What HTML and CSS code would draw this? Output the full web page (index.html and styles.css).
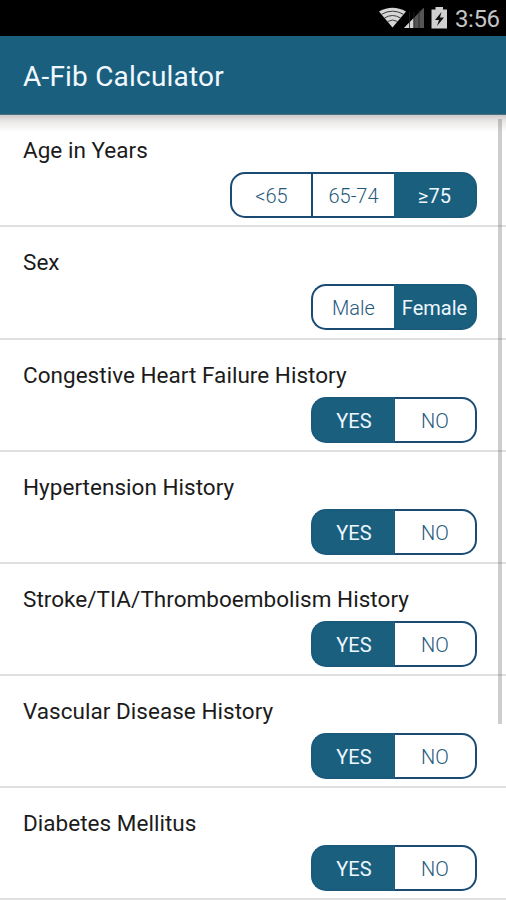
FILE: index.html
```html
<!DOCTYPE html>
<html lang="en">
<head>
<meta charset="utf-8">
<title>A-Fib Calculator</title>
<link rel="stylesheet" href="styles.css">
</head>
<body>
<div class="screen">
  <div class="status">
    <svg class="signals" width="72" height="36" viewBox="0 0 72 36" aria-hidden="true">
      <path d="M0 11.500Q13.500 4 27 11.500L13.500 27.500Z" fill="#d6d6d6"/>
      <g fill="none" stroke="#3a3a3a" stroke-width="1">
        <path d="M2.500 14.300Q13.500 8 24.500 14.300M5.500 18Q13.500 13 21.500 18M8.500 21.500Q13.500 18.500 18.500 21.500"/>
      </g>
      <path d="M45 7.500V28H25Z" fill="#555"/>
      <path d="M34.500 18.300V28H25Z" fill="#d4d4d4"/>
      <path d="M30.500 12V28M35 12V28M40 10V28" stroke="#222" stroke-width="0.8"/>
      <path d="M56.500 7H64V9.500H68V28.500H52.500V9.500H56.500Z" fill="#d0d0d0"/>
      <path d="M62.500 12L56 20H60L58 26L65 17.500H61Z" fill="#111"/>
    </svg>
    <span class="clock">3:56</span>
  </div>
  <header class="appbar"><h1>A-Fib Calculator</h1></header>
  <main class="list">
    <section class="row"><h2>Age in Years</h2><div class="seg three"><span>&lt;65</span><span>65-74</span><span class="on">≥75</span></div></section>
    <section class="row sex"><h2>Sex</h2><div class="seg"><span>Male</span><span class="on">Female</span></div></section>
    <section class="row"><h2>Congestive Heart Failure History</h2><div class="seg yn"><span class="on">YES</span><span>NO</span></div></section>
    <section class="row"><h2>Hypertension History</h2><div class="seg yn"><span class="on">YES</span><span>NO</span></div></section>
    <section class="row"><h2>Stroke/TIA/Thromboembolism History</h2><div class="seg yn"><span class="on">YES</span><span>NO</span></div></section>
    <section class="row"><h2>Vascular Disease History</h2><div class="seg yn"><span class="on">YES</span><span>NO</span></div></section>
    <section class="row"><h2>Diabetes Mellitus</h2><div class="seg yn"><span class="on">YES</span><span>NO</span></div></section>
    <div class="scrollbar"></div>
  </main>
</div>
</body>
</html>
```
FILE: styles.css
```css
* { box-sizing: border-box; }
body { margin: 0; font-family: Roboto, "Liberation Sans", sans-serif; background: #fff; }
.screen { width: 506px; height: 900px; overflow: hidden; display: flex; flex-direction: column; }
.status { height: 36px; flex: none; background: #000; display: flex; justify-content: flex-end; padding-right: 7px; gap: 4px; }
.signals { display: block; }
.clock { color: #c4c4c4; font-size: 24px; line-height: 38px; width: 44px; white-space: nowrap; letter-spacing: -0.4px; }
.appbar { height: 79px; flex: none; background: #1a607e; border-bottom: 1px solid #4e7180; display: flex; align-items: center; padding-left: 23px; }
h1 { margin: 0; padding-top: 3px; font-size: 28px; font-weight: 400; color: #f2f8ff; line-height: 34px; white-space: nowrap; letter-spacing: 0.2px; }
.list { position: relative; flex: 1; background: linear-gradient(#cdc9c8, #e9e7e6 6px, #fff 17px); }
.row { height: 112px; border-bottom: 2px solid #e0e0e0; padding: 21px 29px 0 23px; display: flex; flex-direction: column; }
.row.sex { height: 113px; }
h2 { margin: 0 0 8px; height: 28px; line-height: 28px; font-size: 22.5px; font-weight: 400; color: #1b1b1b; white-space: nowrap; letter-spacing: 0.03px; }
.seg { align-self: flex-end; width: 166px; height: 46px; display: flex; }
.seg span { flex: 1; display: flex; align-items: center; justify-content: center; border: 2px solid #1a4b74; border-width: 2px 0; background: #fff; font-size: 20px; font-weight: 300; color: #1f5a7c; padding-top: 2px; white-space: nowrap; }
.seg span:first-child { border-left-width: 2px; border-radius: 15px 0 0 15px; }
.seg span:last-child { border-right-width: 2px; border-radius: 0 15px 15px 0; }
.seg .on { background: #1a607e; border-color: #1a5b7b; color: #eef7ff; font-weight: 400; }
.seg.three { width: 247px; }
.three span:first-child { border-right-width: 2px; flex: 0 0 83px; }
.yn span:first-child { flex: 0 0 84px; }
.scrollbar { position: absolute; left: 498px; top: 4px; width: 4px; height: 605px; background: rgba(90, 90, 90, 0.3); }
```
